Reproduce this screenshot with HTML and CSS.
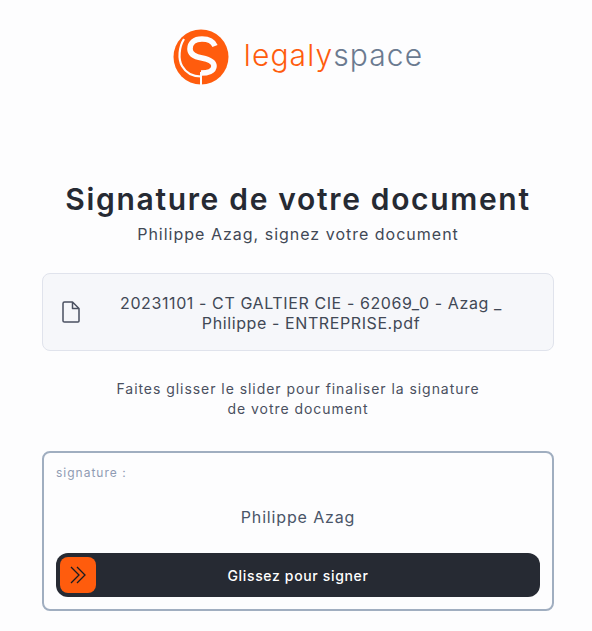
FILE: index.html
```html
<!DOCTYPE html>
<html lang="fr">
<head>
    <meta charset="UTF-8">
    <meta name="viewport" content="width=device-width, initial-scale=1.0">
    <title>Signature de votre document</title>
    <link rel="stylesheet" href="styles.css">
</head>
<body>
    <div class="page">
        <header class="logo">
            <svg class="logo-mark" width="56" height="56" viewBox="0 0 56 56">
                <circle cx="28" cy="28" r="27.5" fill="#ff5c0d"/>
                <path d="M11 10 C6 18 5 30 9 37 C13 44 20 47.500 28 47.500" fill="none" stroke="#fdfdfe" stroke-width="2.200"/>
                <path d="M28 43 V56" fill="none" stroke="#fdfdfe" stroke-width="2"/>
                <path d="M42 17 C40 12 35 10 29 10 C21 10 17 14 17 20 C17 26 23 28 29 29 C36 30.500 41 33 41 37 C41 42 35 44 28 44" fill="none" stroke="#fdfdfe" stroke-width="5.600"/>
            </svg>
            <div class="logo-name"><span class="logo-orange">legaly</span><span class="logo-grey">space</span></div>
        </header>

        <h1 class="title">Signature de votre document</h1>
        <p class="subtitle">Philippe Azag, signez votre document</p>

        <div class="file-card">
            <svg class="file-icon" width="20" height="24" viewBox="0 0 20 24">
                <path d="M3.500 2 H11.500 L18 8.500 V21 Q18 22 17 22 H3.500 Q2 22 2 21 V3.500 Q2 2 3.500 2 Z M11.500 2 V8.500 H18" fill="none" stroke="#4a5060" stroke-width="1.500" stroke-linejoin="round"/>
            </svg>
            <div class="file-name">20231101 - CT GALTIER CIE - 62069_0 - Azag _ Philippe - ENTREPRISE.pdf</div>
        </div>

        <p class="hint">Faites glisser le slider pour finaliser la signature<br>de votre document</p>

        <div class="sign-box">
            <div class="sign-label">signature :</div>
            <div class="sign-name">Philippe Azag</div>
            <div class="slider">
                <div class="slider-handle">
                    <svg width="20" height="20" viewBox="0 0 20 20">
                        <path d="M3 2 L11 10 L3 18 M9 2 L17 10 L9 18" fill="none" stroke="#1a1c22" stroke-width="1.300"/>
                    </svg>
                </div>
                <div class="slider-text">Glissez pour signer</div>
            </div>
        </div>
    </div>
</body>
</html>
```

FILE: styles.css
```css
body {
    margin: 0;
    background-color: #fdfdfe;
    color: #262a33;
    font-family: "Inter", "Liberation Sans", sans-serif;
}

.page {
    padding: 29px 38px 20px 42px;
    text-align: center;
}

.logo {
    display: flex;
    justify-content: center;
    align-items: center;
    gap: 15px;
    height: 56px;
}

.logo-mark {
    display: block;
}

.logo-name {
    font-weight: 300;
    font-size: 30px;
    line-height: 36px;
    letter-spacing: 1.1px;
    margin-top: -4px;
}

.logo-orange {
    color: #ff5c0d;
}

.logo-grey {
    color: #6b7a90;
}

.title {
    margin: 94px 0 0;
    font-size: 30px;
    line-height: 40px;
    font-weight: 600;
    letter-spacing: 1.67px;
    color: #262a33;
}

.subtitle {
    margin: 3px 0 0;
    font-size: 16px;
    line-height: 24px;
    letter-spacing: 1px;
    color: #414855;
}

.file-card {
    display: flex;
    align-items: center;
    height: 76px;
    margin-top: 27px;
    padding: 0 20px 0 18px;
    background-color: #f6f7fa;
    border: 1px solid #e0e3ec;
    border-radius: 8px;
}

.file-icon {
    flex: none;
}

.file-name {
    flex: 1;
    padding: 1px 0 0 8px;
    font-size: 16px;
    line-height: 20px;
    letter-spacing: 0.6px;
    color: #414855;
}

.hint {
    margin: 28px 0 0;
    font-size: 14px;
    line-height: 20px;
    letter-spacing: 0.95px;
    color: #4a5060;
}

.sign-box {
    height: 156px;
    margin-top: 32px;
    padding: 0 12px;
    background-color: #fdfdfe;
    border: 2px solid #a0aec0;
    border-radius: 8px;
    display: flex;
    flex-direction: column;
}

.sign-label {
    margin-top: 11px;
    font-size: 12px;
    line-height: 18px;
    letter-spacing: 1px;
    text-align: left;
    color: #8f9bb3;
}

.sign-name {
    margin-top: 23px;
    font-size: 16px;
    line-height: 24px;
    letter-spacing: 0.85px;
    color: #4a5568;
}

.slider {
    display: flex;
    align-items: center;
    height: 44px;
    margin-top: 24px;
    padding-left: 4px;
    background-color: #262a33;
    border-radius: 12px;
}

.slider-handle {
    display: flex;
    justify-content: center;
    align-items: center;
    width: 36px;
    height: 36px;
    background-color: #ff5c0d;
    border-radius: 8px;
}

.slider-text {
    flex: 1;
    padding-right: 40px;
    font-size: 14px;
    font-weight: 500;
    letter-spacing: 0.65px;
    color: #ffffff;
}
```
